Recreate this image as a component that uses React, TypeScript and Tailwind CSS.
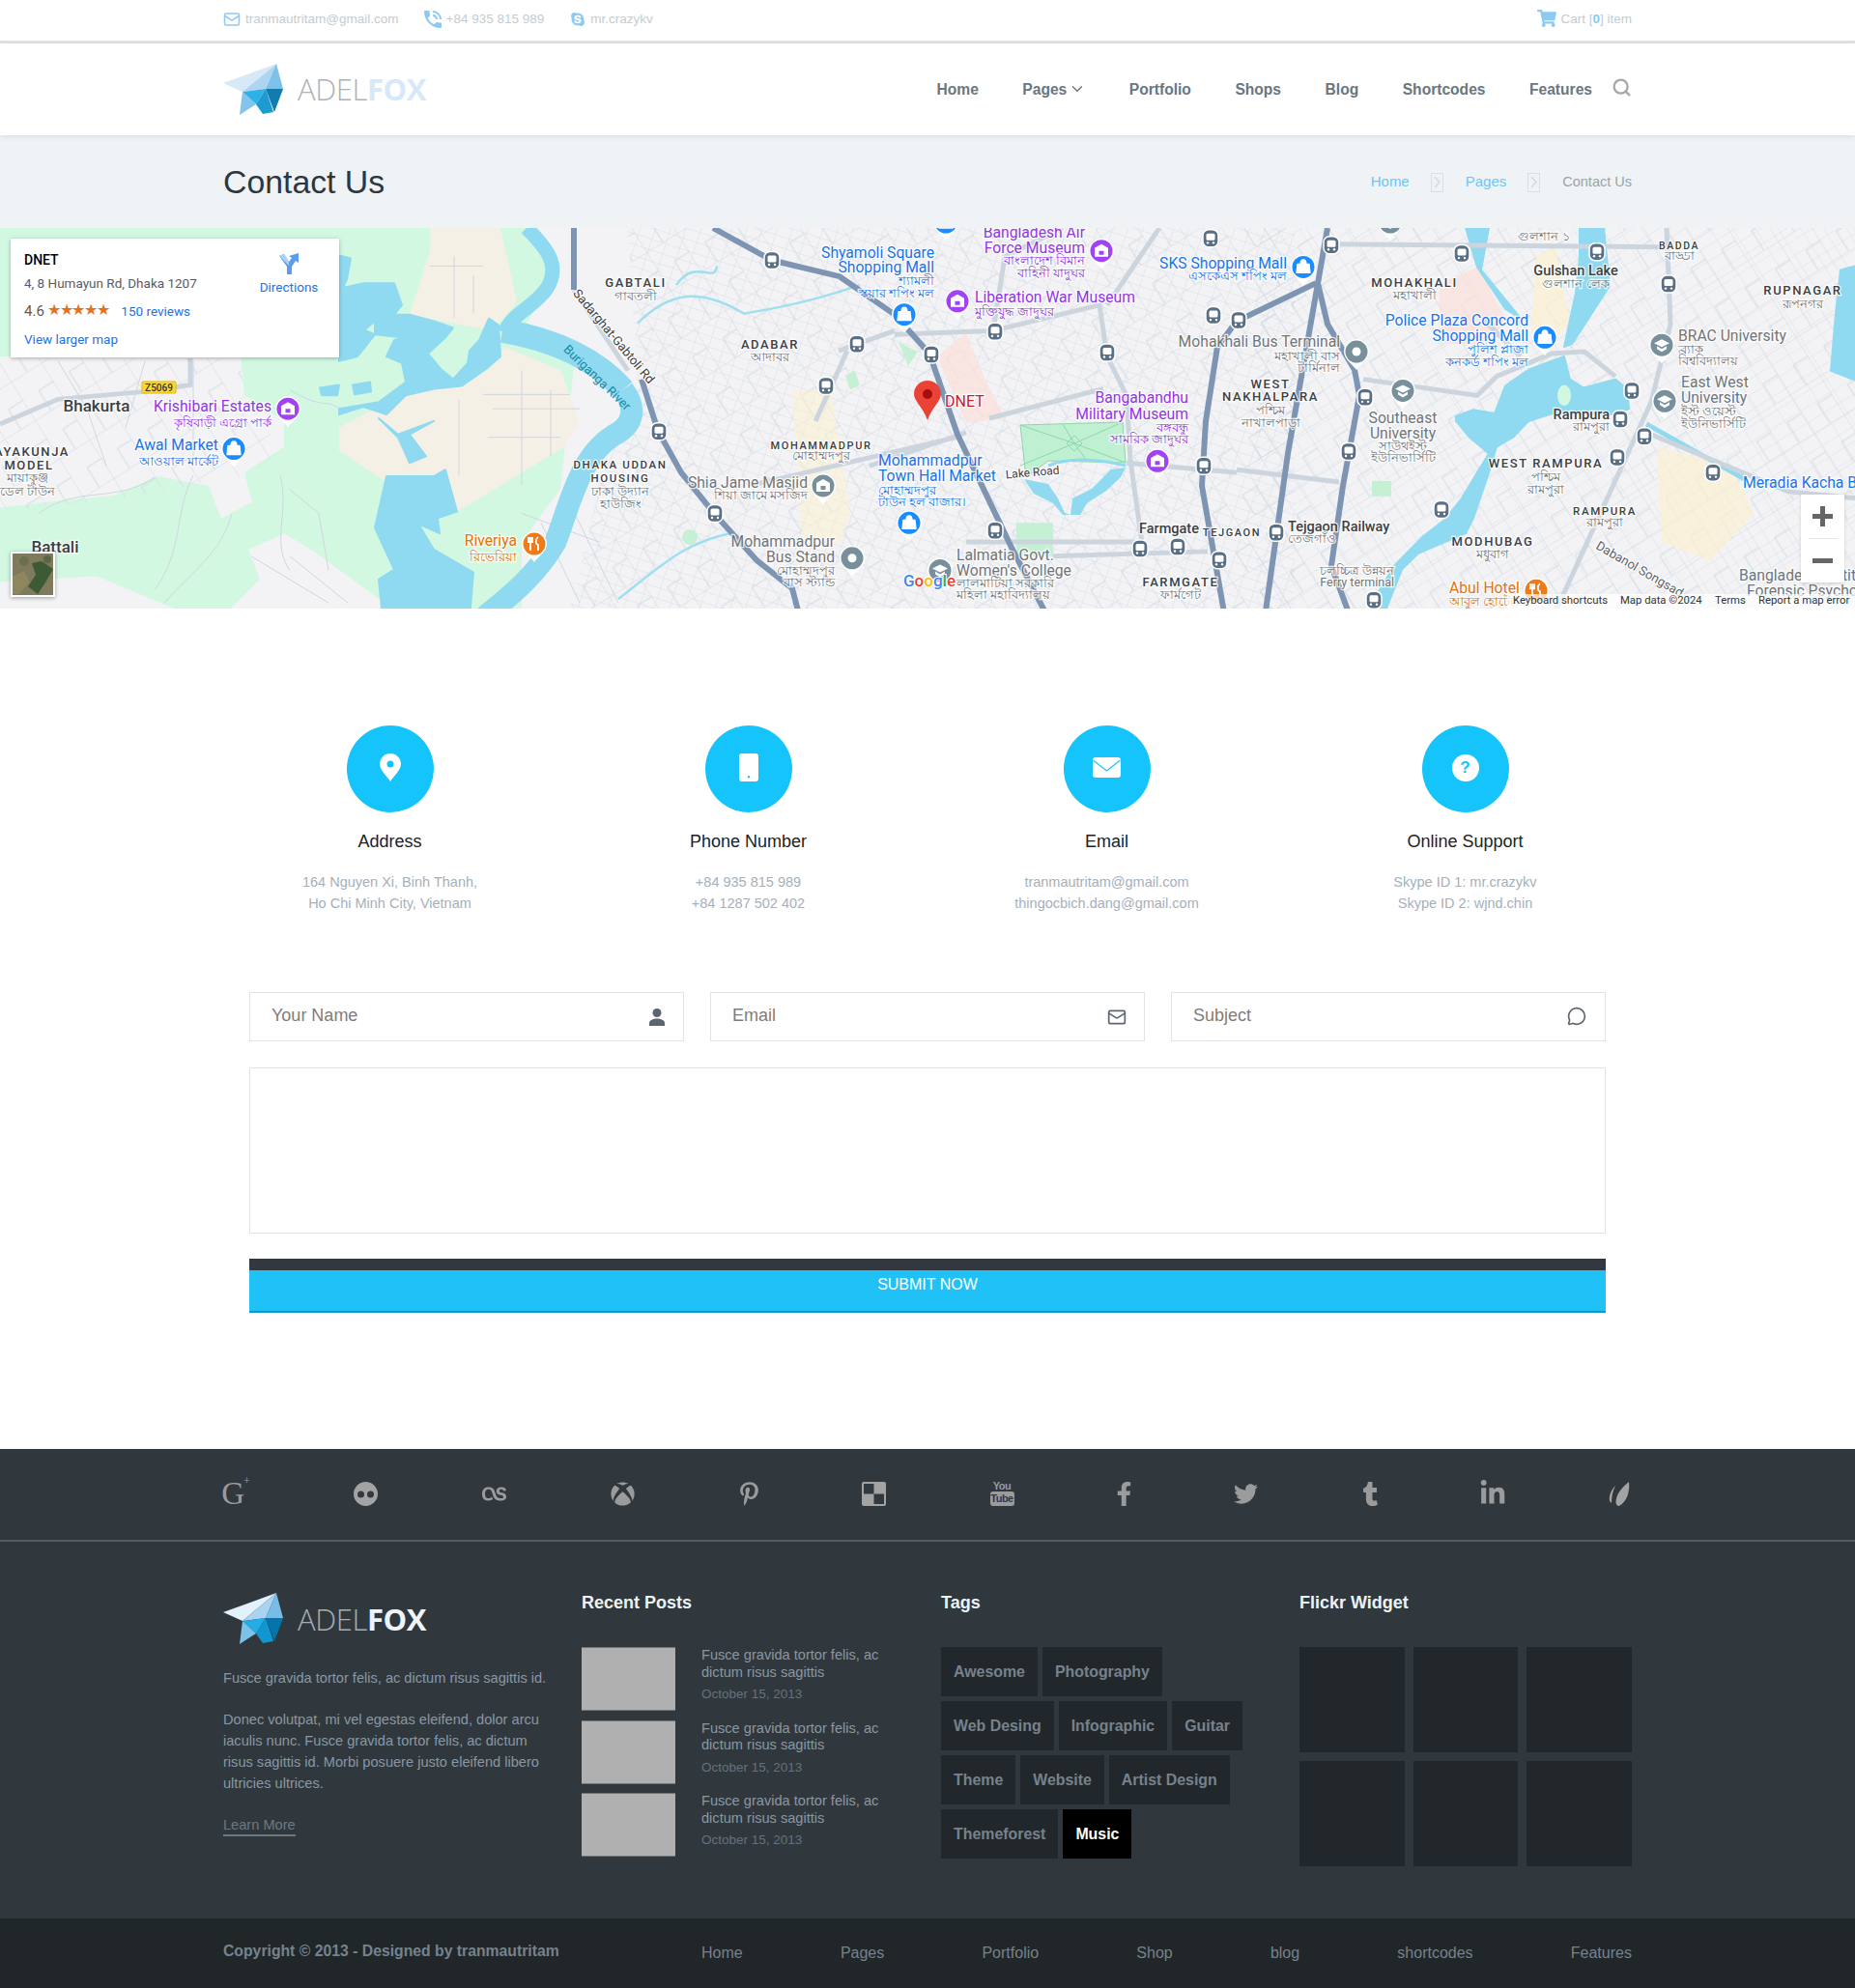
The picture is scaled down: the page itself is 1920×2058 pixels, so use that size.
import { ChevronDown, Mail, MessageCircle, Search } from 'lucide-react';
import { FaFacebookF, FaLastfm, FaLinkedinIn, FaPinterestP, FaShoppingCart, FaSkype, FaTumblr, FaTwitter, FaXbox } from 'react-icons/fa';
import { MdPhoneInTalk } from 'react-icons/md';

function Logo({ dark }: { dark?: boolean }) {
  return (
    <div className="flex items-center">
      <svg width="62" height="54" viewBox="0 0 62 54" className={dark ? '' : 'opacity-95'}>
        <polygon points="0,20 55,0 20,29" fill={dark ? '#e3f1fc' : '#d5e8f8'} />
        <polygon points="55,0 44,26 20,29" fill="#a9d3f1" />
        <polygon points="55,0 62,26 44,26" fill="#77bde9" />
        <polygon points="20,29 44,26 34,42" fill="#22ade6" />
        <polygon points="20,29 34,42 17,53" fill="#7cc1ea" />
        <polygon points="44,26 34,42 41,52 52,50" fill="#1196cf" />
        <polygon points="44,26 62,26 53,50" fill="#0575a9" />
      </svg>
      <div className="ml-[15px] text-[31px] leading-none font-['Open_Sans',sans-serif] tracking-[-0.4px]">
        <span className={dark ? 'font-light text-[#a5adb3]' : 'font-light text-[#aeb2b5]'}>ADEL</span>
        <span className={dark ? 'font-bold text-[#eef5fa]' : 'font-bold text-[#d7e9f8]'}>FOX</span>
      </div>
    </div>
  );
}

// map data was read off the reference, y values get squeezed by fy below
const fy = (y: number) => y * 0.985;

const hoods: [string, number, number, number?][] = [
  ['AYAKUNJA', 33, 240], ['MODEL', 30, 254], ['GABTALI', 658, 62], ['ADABAR', 797, 127], ['MOHAMMADPUR', 850, 232, 11],
  ['DHAKA UDDAN', 642, 253, 11.5], ['HOUSING', 642, 267, 11.5], ['FARMGATE', 1222, 377], ['MOHAKHALI', 1464, 62], ['WEST', 1315, 169],
  ['NAKHALPARA', 1315, 182], ['BADDA', 1738, 22, 10.5], ['RUPNAGAR', 1866, 70], ['WEST RAMPURA', 1600, 252], ['RAMPURA', 1661, 302, 11.5],
  ['MODHUBAG', 1545, 334], ['TEJGAON', 1275, 324, 11],
];

const poi: [string, number, number, string, string?][] = [
  ['Krishibari Estates', 281, 193, '#9334e6', 'end'], ['Awal Market', 226, 234, '#1a73e8', 'end'], ['Riveriya', 535, 334, '#e8710a', 'end'],
  ['Shia Jame Masjid', 836, 273, '#70757a', 'end'], ['Shyamoli Square', 967, 31, '#1a73e8', 'end'], ['Shopping Mall', 967, 47, '#1a73e8', 'end'],
  ['Bangladesh Air', 1123, 10, '#9334e6', 'end'], ['Force Museum', 1123, 26, '#9334e6', 'end'], ['Liberation War Museum', 1009, 78, '#9334e6'],
  ['Bangabandhu', 1230, 184, '#9334e6', 'end'], ['Military Museum', 1230, 201, '#9334e6', 'end'], ['Mohammadpur', 909, 250, '#1a73e8'],
  ['Town Hall Market', 909, 266, '#1a73e8'], ['Mohammadpur', 864, 335, '#70757a', 'end'], ['Bus Stand', 864, 351, '#70757a', 'end'],
  ['Lalmatia Govt.', 990, 349, '#70757a'], ["Women's College", 990, 365, '#70757a'], ['SKS Shopping Mall', 1332, 43, '#1a73e8', 'end'],
  ['Mohakhali Bus Terminal', 1387, 125, '#70757a', 'end'], ['Southeast', 1452, 205, '#70757a', 'middle'], ['University', 1452, 221, '#70757a', 'middle'],
  ['Police Plaza Concord', 1582, 103, '#1a73e8', 'end'], ['Shopping Mall', 1582, 119, '#1a73e8', 'end'], ['BRAC University', 1737, 119, '#70757a'],
  ['East West', 1740, 168, '#70757a'], ['University', 1740, 184, '#70757a'], ['Meradia Kacha Bazar', 1804, 273, '#1a73e8'],
  ['Bangladesh Institute', 1800, 371, '#70757a'], ['Forensic Psychology', 1808, 387, '#70757a'], ['Abul Hotel', 1500, 384, '#e8710a'],
];

const dark: [string, number, number, number, string?][] = [
  ['Bhakurta', 100, 193, 17, 'middle'], ['Battali', 57, 341, 17, 'middle'], ['Gulshan Lake', 1631, 50, 14.5, 'middle'],
  ['Rampura', 1666, 201, 14.5, 'end'], ['Farmgate', 1179, 321, 14.5], ['Tejgaon Railway', 1333, 319, 14.5],
];

const bangla: [string, number, number, string, string?][] = [
  ['কৃষিবাড়ী এগ্রো পার্ক', 281, 209, '#9334e6', 'end'], ['আওয়াল মার্কেট', 226, 250, '#1a73e8', 'end'], ['মায়াকুঞ্জ', 28, 267, '#70757a', 'middle'],
  ['মডেল টাউন', 25, 281, '#70757a', 'middle'], ['রিভেরিয়া', 535, 350, '#e8710a', 'end'], ['গাবতলী', 658, 76, '#70757a', 'middle'],
  ['আদাবর', 797, 140, '#70757a', 'middle'], ['মোহাম্মদপুর', 850, 244, '#70757a', 'middle'], ['ঢাকা উদ্যান', 642, 281, '#70757a', 'middle'],
  ['হাউজিং', 642, 294, '#70757a', 'middle'], ['শিয়া জামে মসজিদ', 836, 285, '#70757a', 'end'], ['শ্যামলী', 967, 60, '#1a73e8', 'end'],
  ['স্কয়ার শপিং মল', 967, 73, '#1a73e8', 'end'], ['বাংলাদেশ বিমান', 1123, 39, '#9334e6', 'end'], ['বাহিনী যাদুঘর', 1123, 52, '#9334e6', 'end'],
  ['মুক্তিযুদ্ধ জাদুঘর', 1009, 92, '#9334e6'], ['বঙ্গবন্ধু', 1230, 214, '#9334e6', 'end'], ['সামরিক জাদুঘর', 1230, 226, '#9334e6', 'end'],
  ['মোহাম্মদপুর', 909, 280, '#1a73e8'], ['টাউন হল বাজার।', 909, 292, '#1a73e8'], ['মোহাম্মদপুর', 864, 364, '#70757a', 'end'],
  ['বাস স্ট্যান্ড', 864, 377, '#70757a', 'end'], ['লালমাটিয়া সরকারি', 990, 378, '#70757a'], ['মহিলা মহাবিদ্যালয়', 990, 390, '#70757a'],
  ['ফার্মগেট', 1222, 390, '#70757a', 'middle'], ['এসকেএস শপিং মল', 1332, 55, '#1a73e8', 'end'], ['মহাখালী', 1464, 75, '#70757a', 'middle'],
  ['মহাখালী বাস', 1387, 139, '#70757a', 'end'], ['টার্মিনাল', 1387, 151, '#70757a', 'end'], ['পশ্চিম', 1315, 196, '#70757a', 'middle'],
  ['নাখালপাড়া', 1315, 209, '#70757a', 'middle'], ['সাউথইস্ট', 1452, 233, '#70757a', 'middle'], ['ইউনিভার্সিটি', 1452, 246, '#70757a', 'middle'],
  ['পুলিশ প্লাজা', 1582, 132, '#1a73e8', 'end'], ['কনকর্ড শপিং মল', 1582, 145, '#1a73e8', 'end'], ['গুলশান লেক', 1631, 63, '#70757a', 'middle'],
  ['গুলশান ১', 1598, 13, '#70757a', 'middle'], ['বাড্ডা', 1738, 33, '#70757a', 'middle'], ['রূপনগর', 1866, 84, '#70757a', 'middle'],
  ['ব্র্যাক', 1737, 132, '#70757a'], ['বিশ্ববিদ্যালয়', 1737, 144, '#70757a'], ['ইস্ট ওয়েস্ট', 1740, 197, '#70757a'], ['ইউনিভার্সিটি', 1740, 210, '#70757a'],
  ['রামপুরা', 1666, 213, '#70757a', 'end'], ['পশ্চিম', 1600, 266, '#70757a', 'middle'], ['রামপুরা', 1600, 279, '#70757a', 'middle'],
  ['রামপুরা', 1661, 314, '#70757a', 'middle'], ['মধুবাগ', 1545, 347, '#70757a', 'middle'], ['তেজগাঁও', 1333, 331, '#70757a'],
  ['চলচ্চিত্র উন্নয়ন', 1443, 364, '#70757a', 'end'], ['Ferry terminal', 1443, 377, '#70757a', 'end'], ['আবুল হোটেল', 1500, 397, '#e8710a'],
];

const pins: [number, number, string, string][] = [
  [298, 190, '#a142f4', 'm'], [242, 232, '#1a8cff', 'b'], [553, 332, '#ef7a1a', 'f'], [852, 271, '#78909c', 'm'], [936, 91, '#1a8cff', 'b'],
  [1140, 24, '#a142f4', 'm'], [991, 77, '#a142f4', 'm'], [1198, 245, '#a142f4', 'm'], [941, 310, '#1a8cff', 'b'], [882, 347, '#78909c', 'd'],
  [973, 360, '#78909c', 's'], [1349, 41, '#1a8cff', 'b'], [1404, 130, '#78909c', 'd'], [1452, 171, '#78909c', 's'], [1599, 115, '#1a8cff', 'b'],
  [1720, 123, '#78909c', 's'], [1723, 182, '#78909c', 's'], [1590, 381, '#ef7a1a', 'f'], [979, -6, '#1a8cff', 'b'], [1439, -6, '#78909c', 's'],
];

const stops: [number, number][] = [
  [799, 34], [887, 122], [855, 166], [964, 133], [1030, 109], [1146, 131], [1256, 92], [1253, 11], [682, 214], [740, 300], [1030, 318], [1180, 337],
  [1246, 250], [1262, 349], [1378, 18], [1513, 27], [1653, 25], [1727, 59], [1282, 97], [1413, 178], [1396, 235], [1689, 171], [1677, 201], [1702, 219],
  [1674, 241], [1773, 257], [1492, 296], [1321, 320], [1422, 391], [1219, 335],
];

const highways = [
  'M738,0 L799,34 L869,51 L926,91 L962,132 L991,217 L1048,338 L1085,410',
  'M594,0 L594,65',
  'M664,159 L681,213 L705,257 L740,301 L783,349 L820,379 L828,410',
  'M1374,0 L1364,58 L1333,237 L1309,410',
  'M1364,58 L1374,101 L1402,149 L1407,176 L1390,271 L1378,355 L1398,410',
  'M1362,58 L1280,98 L1260,125 L1248,203 L1244,271 L1268,410',
];

const roads = [
  'M926,112 L1028,108 L1138,81 L1146,135 L1166,176 L1170,244 L1183,338',
  'M1024,200 L1142,169', 'M1166,247 L1280,257', 'M868,129 L926,108', 'M844,203 L877,129', 'M1280,254 L1386,267',
  'M1411,159 L1529,176 L1549,156 L1606,132 L1640,130 L1672,156', 'M1378,17 L1725,20', 'M1725,0 L1729,101 L1709,183 L1607,410',
  'M1709,217 L1851,277 L1920,284', 'M1100,0 L1040,30 L1028,108', 'M1200,0 L1146,81', 'M594,65 L650,150', 'M0,206 L60,180 L150,172 L197,165 L197,137',
  'M1090,345 L1250,340', 'M900,250 L1000,215', 'M1000,330 L1180,330', 'M780,270 L990,220', 'M1534,95 L1574,135',
];

// thin lanes across the fields and the sandy land
const lanes = [
  'M445,40 H500 M470,30 V95 M490,50 V90', 'M500,175 H590 M510,190 H600 M505,220 H580 M540,150 V270 M570,170 V240 M475,180 V260',
  'M300,170 C330,190 340,180 351,190', 'M300,275 L330,300 L340,360 M290,260 C300,300 280,330 300,360', 'M240,300 C230,340 200,360 170,394',
  'M160,262 C120,290 80,270 40,300 M200,260 C180,300 190,340 160,380', 'M60,140 L90,190 L110,250 M150,140 L130,210 M200,140 V240',
  'M300,345 L360,394 M260,345 L340,394', 'M540,300 L620,330 M560,310 L600,394 M590,290 L640,394 M610,260 L660,300',
];

function Pin({ x, y, color, glyph }: { x: number; y: number; color: string; glyph: string }) {
  return (
    <g transform={`translate(${x} ${fy(y)})`}>
      <path d="M-13,0 A13,13 0 1 1 13,0 C13,8 4,13 0,19 C-4,13 -13,8 -13,0 Z" fill="#fff" />
      <circle r="11.5" fill={color} />
      {glyph === 'd' && <circle r="4.5" fill="#fff" />}
      {glyph === 'b' && <path d="M-6,-3 H6 L7,6 H-7 Z M-3,-3 C-3,-9 3,-9 3,-3" fill="#fff" stroke="#fff" strokeWidth="1.3" strokeLinejoin="round" />}
      {glyph === 'm' && <path d="M0,-7 L7,-3 V6 H-7 V-3 Z M-2.5,0 V4 H2.5 V0 Z" fill="#fff" fillRule="evenodd" />}
      {glyph === 's' && <path d="M0,-6 L8,-2 L0,2 L-8,-2 Z M-5,1 L0,4 L5,1 V4 L0,7 L-5,4 Z" fill="#fff" />}
      {glyph === 'f' && <path d="M-4,-7 V-1 M-6,-7 V-2 H-2 V-7 M-4,-1 V7 M4,-7 C1,-5 1,0 4,1 V7" fill="none" stroke="#fff" strokeWidth="1.8" />}
    </g>
  );
}

function MapArt() {
  return (
    <svg viewBox="0 0 1920 394" className="w-full h-full font-['Roboto',sans-serif]">
      <defs>
        <pattern id="streets" width="15" height="11" patternUnits="userSpaceOnUse" patternTransform="rotate(18)">
          <path d="M0,0 H15 M0,0 V11" stroke="#d8dee6" strokeWidth="1" fill="none" />
        </pattern>
        <pattern id="streets2" width="20" height="14" patternUnits="userSpaceOnUse" patternTransform="rotate(-32)">
          <path d="M0,0 H20 M0,0 V14" stroke="#dce1e8" strokeWidth="1" fill="none" />
        </pattern>
        <pattern id="streets3" width="47" height="37" patternUnits="userSpaceOnUse" patternTransform="rotate(58)">
          <path d="M0,0 H47 M0,0 V37 M23,0 V18 H47" stroke="#d3dae2" strokeWidth="1" fill="none" />
        </pattern>
      </defs>
      <rect width="1920" height="394" fill="#f3f3f5" />
      {/* green land on the west side */}
      <rect width="540" height="394" fill="#d3f8e2" />
      <polygon points="540,0 610,0 580,270 490,394 470,394" fill="#d3f8e2" />
      <g transform="scale(1 0.985)">
        <polygon points="0,135 249,135 253,176 294,203 294,230 253,257 261,288 229,305 216,271 163,261 118,281 49,288 0,294" fill="#f3f3f5" />
        <polygon points="257,338 294,321 322,338 420,410 229,410 269,369" fill="#f3f3f5" />
        <polygon points="0,372 100,366 204,410 0,410" fill="#f3f3f5" />
        <polygon points="556,0 640,0 640,150 580,125 540,110 580,40" fill="#f3f3f5" />
        <polygon points="351,210 408,179 445,169 506,149 522,125 580,149 600,203 584,230 490,288 473,298 449,261 400,267 351,234" fill="#f5f0e5" />
        <polygon points="445,0 518,0 535,78 510,108 424,91 445,24" fill="#f5f0e5" />
        <path d={lanes.join(' ')} stroke="#cfd6df" strokeWidth="1" fill="none" />
      </g>
      {/* street texture */}
      <polygon points="590,394 625,250 660,170 650,0 1340,0 1340,394" fill="url(#streets)" />
      <polygon points="590,394 625,250 660,170 650,0 1340,0 1340,394" fill="url(#streets3)" />
      <rect x="1300" width="620" height="394" fill="url(#streets2)" />
      <rect x="1300" width="620" height="394" fill="url(#streets3)" />
      <polygon points="0,135 249,135 253,176 294,230 253,257 118,281 0,294" fill="url(#streets3)" />
      {/* patches */}
      <g transform="scale(1 0.985)">
        <polygon points="970,135 1000,110 1020,160 1040,200 1000,205" fill="#fbe0da" opacity="0.75" />
        <polygon points="1490,60 1530,40 1560,100 1530,125 1490,120" fill="#fbe0da" opacity="0.75" />
        <polygon points="1590,30 1610,20 1625,100 1600,125 1585,110" fill="#fbf0d0" opacity="0.75" />
        <polygon points="1715,230 1790,250 1815,300 1770,350 1720,330" fill="#fbf0d0" opacity="0.7" />
        <polygon points="820,170 860,170 880,300 870,330 830,330" fill="#fbf0d0" opacity="0.55" />
        <polygon points="930,120 950,130 940,145" fill="#c5f0d4" />
        <polygon points="875,155 885,150 890,165 880,170" fill="#c5f0d4" />
        <polygon points="1052,310 1090,310 1090,345 1052,345" fill="#c5f0d4" />
        <polygon points="1420,266 1440,266 1440,282 1420,282" fill="#c5f0d4" />
        <circle cx="714" cy="325" r="8" fill="#c5f0d4" />
      </g>
      <polygon points="1056,204 1162,201 1165,243 1085,241 1062,258" fill="#bff0d2" stroke="#8fd6ab" strokeWidth="1" />
      <path d="M1056,204 L1112,223 L1162,201 M1056,246 L1112,223 L1165,243 M1100,203 L1112,223 L1125,241 M1112,215 L1120,223 L1112,231 L1104,223 Z" stroke="#8fd6ab" strokeWidth="1" fill="none" />
      {/* water */}
      <polygon points="1060,260 1085,265 1095,280 1102,295 1108,297 1110,280 1130,270 1150,250 1165,248 1160,258 1145,272 1125,285 1118,297 1100,297 1090,285 1070,275" fill="#8fdaf0" />
      <path d="M1085,246 C1110,236 1140,240 1165,246" stroke="#8fdaf0" strokeWidth="3" fill="none" />
      <g transform="scale(1 0.985)">
        <g fill="#8fdaf0" stroke="#8fdaf0" strokeWidth="2" strokeLinejoin="round">
          <polygon points="351,29 363,32 359,54 355,63 376,58 408,58 416,81 408,91 424,91 449,98 469,105 461,115 443,132 457,149 469,159 484,142 486,129 496,118 506,95 516,102 518,135 502,149 478,166 449,169 420,176 400,196 376,188 351,196 351,190 392,183 420,162 416,142 400,135 408,118 416,115 388,112 388,98 376,108 351,95" />
          <polygon points="351,95 388,112 370,135 351,140" />
          <polygon points="331,168 351,165 349,176 333,176" />
          <polygon points="365,165 383,162 384,172 367,175" />
          <polygon points="392,200 412,217 449,203 424,217 441,240 424,247 412,220" />
          <polygon points="400,261 449,261 461,254 473,298 453,305 455,321 433,311 449,338 490,362 486,410 396,410 392,369 408,359 388,315" />
          <polygon points="1619,135 1625,159 1639,168 1672,159 1684,169 1686,190 1672,196 1607,195 1582,203 1566,220 1549,230 1541,257 1525,305 1517,321 1468,342 1451,359 1431,410 1423,410 1427,382 1443,355 1472,325 1496,306 1513,284 1529,257 1541,237 1521,220 1507,203 1507,198 1525,191 1547,195 1558,166 1582,149" />
          <polygon points="1635,0 1660,0 1666,61 1627,122 1619,125 1631,68 1635,30" />
          <polygon points="1517,0 1541,0 1533,44 1574,95 1558,85 1529,41" />
          <polygon points="1905,44 1920,40 1920,160 1895,150 1900,90" />
        </g>
        <ellipse cx="1619" cy="176" rx="7" ry="11" fill="#d3f8e2" />
        <path d="M545,0 C565,20 582,40 565,65 C550,85 530,90 522,110" fill="none" stroke="#8fdaf0" strokeWidth="15" />
        <path d="M520,108 C560,115 610,130 645,170" fill="none" stroke="#8fdaf0" strokeWidth="25" />
        <path d="M645,170 C660,190 655,208 635,218 C600,240 590,290 575,330 C555,365 530,385 500,410" fill="none" stroke="#8fdaf0" strokeWidth="23" />
        <path d="M1704,206 L1806,264" stroke="#8fdaf0" strokeWidth="5" />
        <path d="M660,100 C690,70 720,60 770,90 C830,80 860,70 890,60 M700,60 C720,30 740,60 742,40 M640,390 C690,350 710,330 760,320" stroke="#9fdff0" strokeWidth="2.5" fill="none" />
        {/* roads */}
        {roads.map(d => <path key={d} d={d} stroke="#ccd5de" strokeWidth="5" fill="none" />)}
        {highways.map(d => <path key={d} d={d} stroke="#7e94b3" strokeWidth="6" fill="none" />)}
      </g>
      {/* stops */}
      {stops.map(([x, y]) => (
        <g key={`${x}-${y}`} transform={`translate(${x} ${fy(y)})`}>
          <rect x="-8" y="-9" width="16" height="18" rx="6" fill="#5b6f84" stroke="#fff" strokeWidth="1.5" />
          <rect x="-4.5" y="-5" width="9" height="7" rx="1.5" fill="#fff" />
          <circle cx="-3" cy="4.5" r="1.2" fill="#fff" />
          <circle cx="3" cy="4.5" r="1.2" fill="#fff" />
        </g>
      ))}
      {pins.map(([x, y, c, g]) => <Pin key={`${x}-${y}`} x={x} y={y} color={c} glyph={g} />)}
      {/* labels */}
      <g stroke="#fff" strokeWidth="2.5" strokeOpacity="0.8" paintOrder="stroke">
        {hoods.map(([t, x, y, s]) => (
          <text key={`${t}-${x}`} x={x} y={fy(y)} textAnchor="middle" fontSize={s ?? 13} fontWeight="500" letterSpacing="1.6" fill="#3c4043">{t}</text>
        ))}
        {poi.map(([t, x, y, c, a]) => (
          <text key={`${t}-${x}-${y}`} x={x} y={fy(y)} textAnchor={(a ?? 'start') as 'start'} fontSize="15.7" fill={c}>{t}</text>
        ))}
        {dark.map(([t, x, y, s, a]) => (
          <text key={`${t}-${x}`} x={x} y={fy(y)} textAnchor={(a ?? 'start') as 'start'} fontSize={s} fontWeight="500" fill="#3c4043">{t}</text>
        ))}
        {bangla.map(([t, x, y, c, a]) => (
          <text key={`${t}-${x}-${y}`} x={x} y={fy(y)} textAnchor={(a ?? 'start') as 'start'} fontSize="12.5" fill={c}>{t}</text>
        ))}
        <text x="632" y="115" textAnchor="middle" fontSize="13" fill="#3c4043" transform="rotate(50 632 115)">Sadarghat-Gabtoli Rd</text>
        <text x="615" y="158" textAnchor="middle" fontSize="13" fill="#1a8aa8" stroke="none" transform="rotate(44 615 158)">Buriganga River</text>
        <text x="1069" y="257" textAnchor="middle" fontSize="12" fill="#3c4043" transform="rotate(-5 1069 257)">Lake Road</text>
        <text x="1695" y="357" textAnchor="middle" fontSize="13" fill="#5f6368" transform="rotate(30 1695 357)">Dabanol Songsad</text>
      </g>
      {/* selected place marker */}
      <path d="M960,199 C955,185 946,179 946,172 A14,14 0 1 1 974,172 C974,179 965,185 960,199 Z" fill="#ea4335" />
      <circle cx="960" cy="172" r="5" fill="#a50e0e" />
      <text x="978" y="185" fontSize="16" fill="#c5221f" stroke="#fff" strokeWidth="2.5" paintOrder="stroke">DNET</text>
      <text x="935" y="371" fontSize="17" fontWeight="500" stroke="#fff" strokeWidth="2" paintOrder="stroke">
        <tspan fill="#4285f4">G</tspan><tspan fill="#ea4335">o</tspan><tspan fill="#fbbc05">o</tspan><tspan fill="#4285f4">g</tspan><tspan fill="#34a853">l</tspan><tspan fill="#ea4335">e</tspan>
      </text>
      <rect x="147" y="159" width="35" height="12" rx="1" fill="#fdd835" stroke="#e5b800" />
      <text x="164.5" y="169" textAnchor="middle" fontSize="10" fontWeight="500" fill="#333">Z5069</text>
    </svg>
  );
}

function MapCard() {
  return (
    <div className="absolute left-[11px] top-[11px] w-[340px] h-[123px] bg-white shadow-[0_1px_4px_rgba(0,0,0,0.3)] font-['Roboto',sans-serif] pl-[14px] pt-[12px]">
      <div className="text-[14px] leading-[20px] font-medium text-black">DNET</div>
      <div className="text-[13.5px] leading-[20px] mt-[4px] text-[#5b5b5b]">4, 8 Humayun Rd, Dhaka 1207</div>
      <div className="flex items-center mt-[9px] h-[20px]">
        <span className="text-[15px] text-[#5b5b5b]">4.6</span>
        <span className="ml-[3px] text-[15.5px] tracking-[-1.3px] text-[#e7711b]">★★★★★</span>
        <span className="ml-[13px] text-[13.5px] text-[#1a73e8]">150 reviews</span>
      </div>
      <div className="mt-[9px] text-[13.5px] leading-[20px] text-[#1a73e8]">View larger map</div>
      <div className="absolute left-[257px] top-[15px] w-[62px] flex flex-col items-center">
        <svg width="22" height="22" viewBox="0 0 22 22">
          <path d="M9,22 V14 L1,3 L6,1 L11,9 L14,5 L11,3 L21,0 L21,10 L18,8 L14,14 V22 Z" fill="#5b9cef" />
          <path d="M1,3 L6,1 L11,9 V13 Z" fill="#a9d3f8" />
        </svg>
        <span className="mt-[4px] text-[13.5px] leading-[18px] text-[#1a73e8] whitespace-nowrap">Directions</span>
      </div>
    </div>
  );
}

function MapSection() {
  return (
    <div className="relative h-[394px] overflow-hidden">
      <MapArt />
      <MapCard />
      <div className="absolute left-[11px] top-[335px] w-[46px] h-[47px] bg-white p-[2px] shadow-[0_1px_4px_rgba(0,0,0,0.35)]">
        <svg viewBox="0 0 42 43" className="w-full h-full">
          <rect width="42" height="43" fill="#7f7a5c" />
          <path d="M20,10 L30,8 L42,16 L34,30 L26,42 L16,34 L24,22 Z" fill="#3d5a36" />
          <path d="M0,24 L12,18 L18,30 L6,42 L0,42 Z" fill="#8f8660" />
          <circle cx="12" cy="8" r="5" fill="#6a6f4e" />
          <circle cx="36" cy="6" r="4" fill="#5d6547" />
        </svg>
      </div>
      <div className="absolute left-[1864px] top-[276px] w-[45px] h-[91px] bg-white shadow-[0_1px_3px_rgba(0,0,0,0.15)] flex flex-col items-center">
        <div className="h-[45px] flex items-center justify-center">
          <svg width="21" height="21" viewBox="0 0 21 21"><path d="M8,0 H13 V8 H21 V13 H13 V21 H8 V13 H0 V8 H8 Z" fill="#666" /></svg>
        </div>
        <div className="w-[30px] h-px bg-[#e6e6e6]" />
        <div className="h-[45px] flex items-center justify-center">
          <div className="w-[21px] h-[5px] bg-[#666]" />
        </div>
      </div>
      <div className="absolute left-[1560px] right-0 bottom-0 h-[15px] bg-white/70 font-['Roboto',sans-serif] text-[11.3px] leading-[14px] text-[#333] flex pl-[6px]">
        <span className="w-[111px]">Keyboard shortcuts</span>
        <span className="w-[98px]">Map data ©2024</span>
        <span className="w-[45px]">Terms</span>
        <span>Report a map error</span>
      </div>
    </div>
  );
}

const contacts = [
  { title: 'Address', lines: ['164 Nguyen Xi, Binh Thanh,', 'Ho Chi Minh City, Vietnam'], icon: 'pin' },
  { title: 'Phone Number', lines: ['+84 935 815 989', '+84 1287 502 402'], icon: 'phone' },
  { title: 'Email', lines: ['tranmautritam@gmail.com', 'thingocbich.dang@gmail.com'], icon: 'mail' },
  { title: 'Online Support', lines: ['Skype ID 1: mr.crazykv', 'Skype ID 2: wjnd.chin'], icon: 'help' },
];

function ContactIcon({ name }: { name: string }) {
  if (name === 'pin') {
    return (
      <svg width="22" height="29" viewBox="0 0 22 29">
        <path fillRule="evenodd" d="M11,0 A11,11 0 0 1 22,11 C22,17 14,24 11,29 C8,24 0,17 0,11 A11,11 0 0 1 11,0 Z M11,7.5 A3.5,3.5 0 1 0 11,14.5 A3.5,3.5 0 1 0 11,7.5 Z" fill="#fff" />
      </svg>
    );
  }
  if (name === 'phone') {
    return (
      <svg width="20" height="29" viewBox="0 0 20 29">
        <path fillRule="evenodd" d="M3,0 H17 A3,3 0 0 1 20,3 V26 A3,3 0 0 1 17,29 H3 A3,3 0 0 1 0,26 V3 A3,3 0 0 1 3,0 Z M10,23 A1.3,1.3 0 1 0 10,25.6 A1.3,1.3 0 1 0 10,23 Z" fill="#fff" />
      </svg>
    );
  }
  if (name === 'mail') {
    return (
      <svg width="29" height="21" viewBox="0 0 29 21">
        <rect width="29" height="21" rx="3" fill="#fff" />
        <path d="M0.5,3 L14.5,14 L28.5,3" stroke="#14c4fb" strokeWidth="1.2" fill="none" />
      </svg>
    );
  }
  return (
    <div className="w-[28px] h-[28px] rounded-full bg-white flex items-center justify-center text-[17px] font-bold leading-none text-[#14c4fb]">?</div>
  );
}

function ContactRow() {
  return (
    <div className="w-[1484px] mx-auto grid grid-cols-4 pt-[121px]">
      {contacts.map(c => (
        <div key={c.title} className="flex flex-col items-center">
          <div className="w-[90px] h-[90px] rounded-full bg-[#14c4fb] flex items-center justify-center pb-[3px]">
            <ContactIcon name={c.icon} />
          </div>
          <div className="mt-[17px] text-[18px] leading-[26px] text-[#222]">{c.title}</div>
          <div className="mt-[18px] text-[14.5px] leading-[22px] text-[#a6b0b9] text-center">
            {c.lines.map(l => <div key={l}>{l}</div>)}
          </div>
        </div>
      ))}
    </div>
  );
}

function UserIcon() {
  return (
    <svg width="16" height="18" viewBox="0 0 16 18">
      <circle cx="8" cy="4.5" r="4.5" fill="#5b6670" />
      <path d="M0,18 V15 C0,12 4,10.5 8,10.5 C12,10.5 16,12 16,15 V18 Z" fill="#5b6670" />
    </svg>
  );
}

function Field({ placeholder, icon }: { placeholder: string; icon: React.ReactNode }) {
  return (
    <div className="flex items-center h-[51px] border border-[#e1e3e9] pl-[22px] pr-[19px]">
      <input placeholder={placeholder} className="flex-1 min-w-0 h-full text-[18px] outline-none placeholder:text-[#7d7d7d] pb-[2px]" />
      {icon}
    </div>
  );
}

function ContactForm() {
  return (
    <form className="w-[1404px] mx-auto mt-[81px] pb-[141px]">
      <div className="grid grid-cols-3 gap-[27px]">
        <Field placeholder="Your Name" icon={<UserIcon />} />
        <Field placeholder="Email" icon={<Mail size={20} strokeWidth={2} className="text-[#5b6670] mr-[-1px]" />} />
        <Field placeholder="Subject" icon={<MessageCircle size={20} strokeWidth={2} className="text-[#5b6670] -mt-[2px]" />} />
      </div>
      <textarea className="block w-full h-[172px] mt-[27px] border border-[#e1e3e9] outline-none resize-none" />
      <button type="button" className="block w-full h-[56px] mt-[26px] bg-[#1fc1f7] border-t-[12px] border-b-2 border-t-[#31383f] border-b-[#1296cc] text-white text-[16px] leading-[20px] uppercase pb-[12px]">
        Submit now
      </button>
    </form>
  );
}

function Social() {
  const cls = 'text-[#9b9b9b]';
  const cell = 'w-[26px] flex justify-center items-center';
  return (
    <div className="h-[96px] border-b-2 border-[#565c61]">
      <div className="w-[1458px] mx-auto h-[94px] pb-[2px] grid items-center grid-cols-[134px_133px_133px_131px_129px_133px_126px_126px_129px_127px_131px_26px]">
        <div className={cell}>
          <span className="font-['Liberation_Serif',serif] text-[33px] leading-[25px] text-[#9b9b9b] whitespace-nowrap">G<sup className="text-[12px] -ml-px align-[14px]">+</sup></span>
        </div>
        <div className={cell}><svg width="25" height="25" viewBox="0 0 25 25"><ellipse cx="12.5" cy="12.5" rx="12.5" ry="12.5" fill="#a3a3a3" /><circle cx="7.5" cy="13" r="3.5" fill="#31383f" /><circle cx="17.5" cy="13" r="3.5" fill="#31383f" /></svg></div>
        <div className={cell}><FaLastfm size={25} className={cls} /></div>
        <div className={cell}><FaXbox size={25} className={cls} /></div>
        <div className={cell}><FaPinterestP size={25} className={cls} /></div>
        <div className={cell}><svg width="25" height="25" viewBox="0 0 25 25"><rect width="25" height="25" rx="2" fill="#a3a3a3" /><rect x="2" y="2" width="10.5" height="10.5" fill="#31383f" /><rect x="12.5" y="12.5" width="10.5" height="10.5" fill="#31383f" /></svg></div>
        <div className={cell}>
          <div className="w-[25px] h-[26px] flex flex-col items-center text-[#9b9b9b]">
            <span className="text-[11px] leading-[11px] font-bold tracking-[-0.5px]">You</span>
            <span className="w-full h-[15px] rounded-[3px] bg-[#9b9b9b] text-[#31383f] text-[11px] leading-[15px] text-center font-bold tracking-[-0.5px]">Tube</span>
          </div>
        </div>
        <div className={cell}><FaFacebookF size={25} className={cls} /></div>
        <div className={cell}><FaTwitter size={25} className={cls} /></div>
        <div className={cell}><FaTumblr size={25} className={cls} /></div>
        <div className={cell}><FaLinkedinIn size={28} className={cls} /></div>
        <div className={cell}><svg width="22" height="25" viewBox="0 0 22 25"><path d="M21,0 C22,8 20,20 11,25 C6,25 7,18 10,12 C13,7 17,3 21,0 Z" fill="#a3a3a3" /><path d="M7,4 C3,8 0,14 1,20 C2,21 3,22 3,22 C3,16 4,10 7,4 Z" fill="#a3a3a3" /></svg></div>
      </div>
    </div>
  );
}

function RecentPosts() {
  return (
    <div>
      <h3 className="text-[18px] leading-[22px] font-bold text-[#eaf3f8]">Recent Posts</h3>
      <div className="mt-[35px] flex flex-col gap-[9.5px]">
        {[0, 1, 2].map(i => (
          <div key={i} className="flex h-[66px] gap-[27px]">
            <div className="w-[97px] bg-[#b0b0b0] border-t border-b border-[#70757a]" />
            <div className="w-[190px]">
              <div className="text-[14.6px] leading-[17.5px] text-[#8a97a2]">Fusce gravida tortor felis, ac dictum risus sagittis</div>
              <div className="mt-[4px] text-[13.5px] leading-[20px] text-[#66717b]">October 15, 2013</div>
            </div>
          </div>
        ))}
      </div>
    </div>
  );
}

const tags = ['Awesome', 'Photography', 'Web Desing', 'Infographic', 'Guitar', 'Theme', 'Website', 'Artist Design', 'Themeforest'];

function Tags() {
  return (
    <div>
      <h3 className="text-[18px] leading-[22px] font-bold text-[#eaf3f8]">Tags</h3>
      <div className="mt-[35px] w-[344px] flex flex-wrap gap-[5px]">
        {tags.map(t => (
          <span key={t} className="h-[51px] px-[13px] flex items-center bg-[#22272b] text-[15.9px] font-bold text-[#76828c]">{t}</span>
        ))}
        <span className="h-[51px] px-[13px] flex items-center bg-black text-[15.9px] font-bold text-white">Music</span>
      </div>
    </div>
  );
}

function Flickr() {
  return (
    <div>
      <h3 className="text-[18px] leading-[22px] font-bold text-[#eaf3f8]">Flickr Widget</h3>
      <div className="mt-[35px] grid grid-cols-3 gap-[9px]">
        {[0, 1, 2, 3, 4, 5].map(i => <div key={i} className="h-[109px] bg-[#22272b]" />)}
      </div>
    </div>
  );
}

function CrumbSep() {
  return (
    <span className="ml-[22px] mr-[23px] w-[13px] h-[20px] flex items-center justify-center border border-[#dcdfe2]">
      <svg width="7" height="13" viewBox="0 0 7 13"><path d="M1,1 L6,6.5 L1,12" stroke="#d5d9dc" strokeWidth="1.5" fill="none" /></svg>
    </span>
  );
}

export default function App() {
  return (
    <div className="bg-white font-['Liberation_Sans',Arial,sans-serif]">
      <div className="h-[45px] border-b-[3px] border-[#e0e0e0]">
        <div className="w-[1458px] mx-auto h-[42px] pb-[2px] flex items-center justify-between text-[13.5px] text-[#c3ccd3]">
          <div className="flex items-center">
            <Mail size={18} strokeWidth={2} className="text-[#8ccaf1]" />
            <span className="ml-[5px]">tranmautritam@gmail.com</span>
            <MdPhoneInTalk size={24} className="ml-[23px] text-[#8ccaf1]" />
            <span className="ml-[2px]">+84 935 815 989</span>
            <FaSkype size={16} className="ml-[27px] text-[#8ccaf1]" />
            <span className="ml-[5px]">mr.crazykv</span>
          </div>
          <div className="flex items-center">
            <FaShoppingCart size={20} className="text-[#8ccaf1] -mt-[3px]" />
            <span className="ml-[4px]">Cart [<b className="text-[#8ccaf1]">0</b>] item</span>
          </div>
        </div>
      </div>

      <header className="relative h-[95px] shadow-[0_2px_5px_rgba(0,0,0,0.08)]">
        <div className="w-[1458px] mx-auto h-full flex items-center justify-between">
          <Logo />
          <nav className="flex items-center gap-[45.5px] text-[15.6px] font-bold text-[#6a7680]">
            <span>Home</span>
            <span className="flex items-center gap-[2px] -mr-[1px]">Pages <ChevronDown size={18} strokeWidth={1.8} /></span>
            <span>Portfolio</span>
            <span>Shops</span>
            <span>Blog</span>
            <span>Shortcodes</span>
            <span className="flex items-center gap-[20px]">Features <Search size={21} strokeWidth={2.6} className="text-[#a7a7a7] -mt-[3px]" /></span>
          </nav>
        </div>
      </header>

      <div className="h-[96px] bg-[#eff3f6]">
        <div className="w-[1458px] mx-auto h-full flex items-center justify-between">
          <h1 className="text-[33.8px] font-normal text-[#2f363c]">Contact Us</h1>
          <div className="flex items-center text-[15px] pt-px">
            <span className="text-[#6cc6f8]">Home</span>
            <CrumbSep />
            <span className="text-[#6cc6f8]">Pages</span>
            <CrumbSep />
            <span className="text-[14.5px] text-[#9aa3a9]">Contact Us</span>
          </div>
        </div>
      </div>

      <MapSection />
      <ContactRow />
      <ContactForm />

      <footer className="bg-[#30383e]">
        <Social />
        <div className="h-[390px] pt-[52px]">
          <div className="w-[1458px] mx-auto grid grid-cols-[371px_372px_371px_344px]">
            <div className="w-[340px] pt-px">
              <Logo dark />
              <p className="mt-[23px] text-[14.6px] leading-[22px] text-[#8a97a2] whitespace-nowrap">Fusce gravida tortor felis, ac dictum risus sagittis id.</p>
              <p className="mt-[21px] text-[14.6px] leading-[22px] text-[#8a97a2]">Donec volutpat, mi vel egestas eleifend, dolor arcu iaculis nunc. Fusce gravida tortor felis, ac dictum risus sagittis id. Morbi posuere justo eleifend libero ultricies ultrices.</p>
              <a href="#" className="inline-block mt-[22px] text-[14.6px] leading-[20px] text-[#6d7881] border-b-2 border-[#6d7881]">Learn More</a>
            </div>
            <RecentPosts />
            <Tags />
            <Flickr />
          </div>
        </div>
        <div className="h-[72px] bg-[#212629]">
          <div className="w-[1458px] mx-auto h-full flex items-center">
            <div className="w-[495px] text-[15.75px] font-bold text-[#76828c] -mt-[4px]">Copyright © 2013 - Designed by tranmautritam</div>
            <div className="flex-1 flex justify-between text-[16px] text-[#76828c]">
              {['Home', 'Pages', 'Portfolio', 'Shop', 'blog', 'shortcodes', 'Features'].map(l => <span key={l}>{l}</span>)}
            </div>
          </div>
        </div>
      </footer>
    </div>
  );
}
